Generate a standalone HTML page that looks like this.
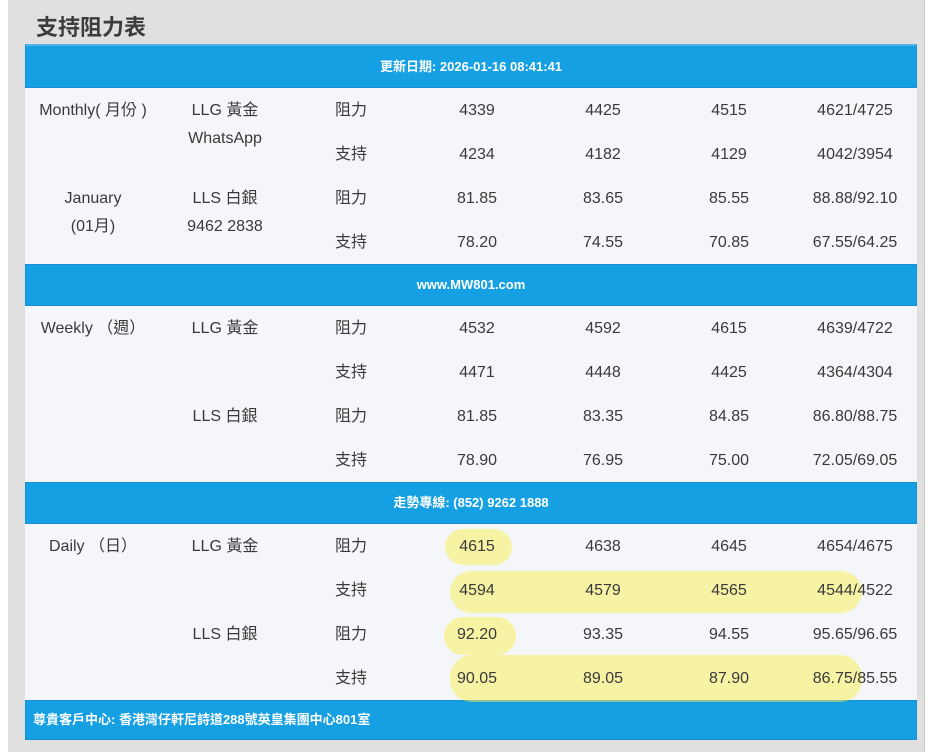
<!DOCTYPE html>
<html><head><meta charset="utf-8"><style>
*{margin:0;padding:0;box-sizing:border-box}
body{width:938px;height:752px;background:#fff;position:relative;overflow:hidden;font-family:"Liberation Sans","Noto Sans CJK TC",sans-serif;color:#3a3a3a}
#panel{position:absolute;left:8px;top:0;width:917px;height:752px;background:#e0e0e0;border-right:1px solid #c8c8c8}
h1{position:absolute;left:36px;top:10px;font-size:22px;font-weight:bold;color:#3c3c3c}
.row{position:absolute;left:25px;width:892px;background:#f5f6fa}
.blue{position:absolute;left:25px;width:892px;background:#16a0e4;border:1px solid #1a8ccf;color:#fff;font-size:13px;font-weight:bold;text-align:center}
.t{position:absolute;font-size:16px;line-height:22px;height:22px;transform:translateX(-50%);white-space:nowrap}
.hl{position:absolute;background:rgba(250,240,80,0.5);border-radius:22px}
</style></head><body>
<div id="panel"></div>
<h1>支持阻力表</h1>
<div class="blue" style="top:44px;height:44px;border-top:2px solid #4db3e8;line-height:42px">更新日期: 2026-01-16 08:41:41</div>
<div class="row" style="top:88px;height:176px"></div>
<div class="blue" style="top:264px;height:42px;line-height:40px">www.MW801.com</div>
<div class="row" style="top:306px;height:176px"></div>
<div class="blue" style="top:482px;height:42px;line-height:40px">走勢專線: (852) 9262 1888</div>
<div class="row" style="top:524px;height:176px"></div>
<div class="blue" style="top:700px;height:40px;line-height:38px;text-align:left;padding-left:7px">尊貴客戶中心: 香港灣仔軒尼詩道288號英皇集團中心801室</div>

<div class="hl" style="left:445px;top:529px;width:67px;height:36px"></div>
<div class="hl" style="left:450px;top:571px;width:412px;height:42px"></div>
<div class="hl" style="left:444px;top:617px;width:72px;height:38px"></div>
<div class="hl" style="left:450px;top:655px;width:412px;height:47px"></div>

<div id="c"></div>
<script>
var data=[
[88,"Monthly( 月份 )","LLG 黃金","阻力","4339","4425","4515","4621/4725"],
[132,"","WhatsApp|","支持","4234","4182","4129","4042/3954"],
[176,"January","LLS 白銀","阻力","81.85","83.65","85.55","88.88/92.10"],
[220,"(01月)|","9462 2838|","支持","78.20","74.55","70.85","67.55/64.25"],
[306,"Weekly （週）","LLG 黃金","阻力","4532","4592","4615","4639/4722"],
[350,"","","支持","4471","4448","4425","4364/4304"],
[394,"","LLS 白銀","阻力","81.85","83.35","84.85","86.80/88.75"],
[438,"","","支持","78.90","76.95","75.00","72.05/69.05"],
[524,"Daily （日）","LLG 黃金","阻力","4615","4638","4645","4654/4675"],
[568,"","","支持","4594","4579","4565","4544/4522"],
[612,"","LLS 白銀","阻力","92.20","93.35","94.55","95.65/96.65"],
[656,"","","支持","90.05","89.05","87.90","86.75/85.55"]];
var xs=[93,225,351,477,603,729,855],h="";
data.forEach(function(r){for(var i=1;i<8;i++){var s=r[i],y=r[0]+12;if(!s)continue;if(s.slice(-1)=="|"){s=s.slice(0,-1);y=r[0]-4;}
h+='<div class="t" style="left:'+xs[i-1]+'px;top:'+y+'px">'+s+'</div>';}});
document.getElementById("c").innerHTML=h;
</script>
</body></html>
